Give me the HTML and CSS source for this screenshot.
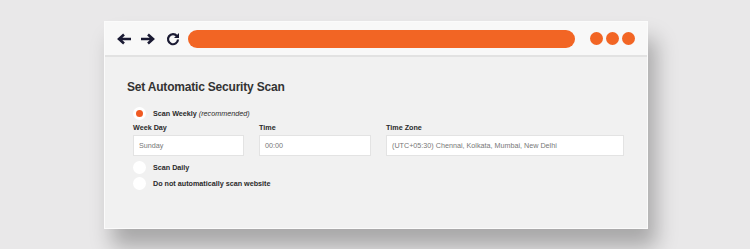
FILE: index.html
```html
<!DOCTYPE html>
<html>
<head>
<meta charset="utf-8">
<link rel="stylesheet" href="styles.css">
</head>
<body>
<div class="window">
  <div class="toolbar">
    <div class="nav">
      <svg class="icon" width="15" height="12" viewBox="0 0 15 12"><path d="M14 6H3M7 1.5L2 6l5 4.5" fill="none" stroke="#1a1a33" stroke-width="2.6"/></svg>
      <svg class="icon" width="15" height="12" viewBox="0 0 15 12"><path d="M1 6h11M8 1.5L13 6l-5 4.5" fill="none" stroke="#1a1a33" stroke-width="2.6"/></svg>
      <svg class="icon reload" width="14" height="14" viewBox="0 0 14 14"><path d="M11 4.2A5 5 0 1 0 12 7.5" fill="none" stroke="#1a1a33" stroke-width="2.2"/><path d="M13 1v5H8z" fill="#1a1a33"/></svg>
    </div>
    <div class="url"></div>
    <div class="dots"><span></span><span></span><span></span></div>
  </div>
  <div class="content">
    <h1 class="title">Set Automatic Security Scan</h1>
    <div class="option first"><span class="radio checked"></span><span class="label">Scan Weekly <em>(recommended)</em></span></div>
    <div class="fields">
      <div class="field f1"><div class="flabel">Week Day</div><div class="input">Sunday</div></div>
      <div class="field f2"><div class="flabel">Time</div><div class="input">00:00</div></div>
      <div class="field f3"><div class="flabel">Time Zone</div><div class="input">(UTC+05:30) Chennai, Kolkata, Mumbai, New Delhi</div></div>
    </div>
    <div class="option"><span class="radio"></span><span class="label">Scan Daily</span></div>
    <div class="option"><span class="radio"></span><span class="label">Do not automatically scan website</span></div>
  </div>
</div>
</body>
</html>
```
FILE: styles.css
```css
html, body { margin: 0; padding: 0; }
body {
  background: #e9e8e9;
  width: 750px;
  height: 249px;
  overflow: hidden;
  font-family: "Liberation Sans", Arial, sans-serif;
  padding-top: 21px;
  box-sizing: border-box;
}
.window {
  margin-left: 104px;
  width: 544px;
  background: #f1f1f1;
  border: 1px solid #fbfbfb;
  box-sizing: border-box;
  box-shadow: 8px 18px 20px rgba(0,0,0,0.28);
}
.toolbar {
  height: 33px;
  background: #f8f8f8;
  display: flex;
  align-items: center;
  padding-left: 12px;
  border-bottom: 2px solid #e2e2e2;
}
.nav { display: flex; align-items: center; gap: 8px; }
.reload { margin-left: 3px; }
.url {
  margin-left: 8px;
  width: 387px;
  height: 18px;
  border-radius: 9px;
  background: #f26524;
}
.dots { display: flex; gap: 3px; margin-left: 15px; }
.dots span {
  width: 13px; height: 13px; border-radius: 50%;
  background: #f26524;
}
.content {
  padding: 23px 23px 37px 22px;
}
.title {
  margin: 0 0 11px 0;
  font-size: 12px;
  letter-spacing: -0.2px;
  font-weight: bold;
  color: #333;
  line-height: 14px;
}
.option {
  display: flex;
  align-items: center;
  height: 16px;
  margin-left: 6px;
}
.option.first { margin-bottom: 1px; }
.radio {
  width: 13px; height: 13px; border-radius: 50%;
  background: #fff;
  box-sizing: border-box;
  position: relative;
  flex: none;
}
.radio.checked::after {
  content: "";
  position: absolute;
  left: 3px; top: 3px;
  width: 7px; height: 7px;
  border-radius: 50%;
  background: #f05a22;
}
.label {
  margin-left: 7px;
  font-size: 7.2px;
  font-weight: bold;
  color: #2a2a2a;
}
.label em { font-weight: normal; }
.fields {
  display: flex;
  gap: 15px;
  margin: 0 0 3px 6px;
}
.flabel {
  font-size: 7.2px;
  font-weight: bold;
  color: #2a2a2a;
  height: 12px;
  line-height: 12px;
  margin-bottom: 1px;
}
.input {
  height: 21px;
  box-sizing: border-box;
  background: #fff;
  border: 1px solid #e3e3e3;
  font-size: 7.2px;
  color: #777;
  line-height: 19px;
  padding-left: 5px;
}
.f1 { width: 111px; }
.f2 { width: 112px; }
.f3 { width: 238px; }
```
